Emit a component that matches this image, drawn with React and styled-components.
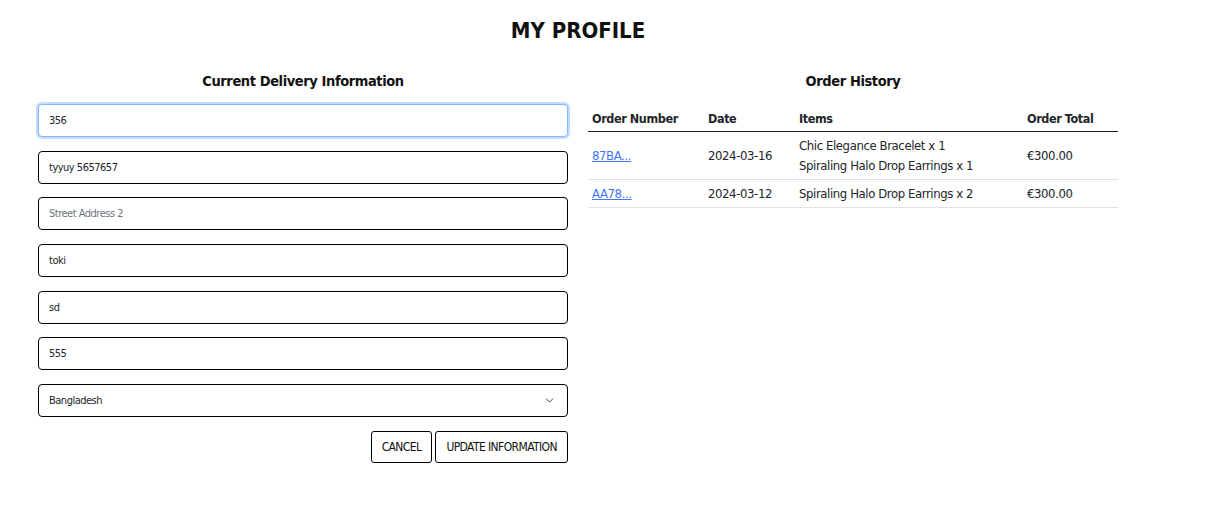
import React from "react";
import styled, { createGlobalStyle } from "styled-components";
import { ChevronDown } from "lucide-react";

const FONT = `"DejaVu Sans Condensed", "DejaVu Sans", sans-serif`;

const Global = createGlobalStyle`
  html, body { margin: 0; padding: 0; background: #fff; }
  body { font-family: ${FONT}; color: #212529; }
  * { box-sizing: border-box; }
`;

const Page = styled.div`
  padding: 15px 0 40px 38px;
  width: 1118px;
`;

const Title = styled.h1`
  margin: 0;
  text-align: center;
  font-size: 22px;
  line-height: 32px;
  font-weight: 700;
  letter-spacing: 0px;
  color: #111;
`;

const Columns = styled.div`
  display: grid;
  grid-template-columns: 530px 530px;
  column-gap: 20px;
  margin-top: 22px;
`;

const Column = styled.section`
  display: flex;
  flex-direction: column;
`;

const Heading = styled.h2`
  margin: 0 0 ${(p) => p.$gap}px;
  text-align: center;
  font-size: 14.5px;
  line-height: 24px;
  font-weight: 700;
  letter-spacing: -0.4px;
  color: #111;
`;

const Form = styled.form`
  display: flex;
  flex-direction: column;
  gap: 13.7px;
`;

const Input = styled.input`
  display: block;
  width: 100%;
  height: 33px;
  padding: 0 10px;
  font-family: ${FONT};
  font-size: 11px;
  letter-spacing: -0.5px;
  color: #212529;
  background: #fff;
  border: 1px solid ${(p) => (p.$focused ? "#86b7fe" : "#000")};
  border-radius: 4px;
  box-shadow: ${(p) => (p.$focused ? "0 0 0 2px rgba(13,110,253,0.25)" : "none")};
  outline: none;
  &::placeholder { color: #6c757d; }
`;

const SelectWrap = styled.div`
  position: relative;
`;

const Select = styled.select`
  appearance: none;
  -webkit-appearance: none;
  display: block;
  width: 100%;
  height: 33px;
  padding: 0 10px;
  font-family: ${FONT};
  font-size: 11px;
  letter-spacing: -0.5px;
  color: #212529;
  background: #fff;
  border: 1px solid #000;
  border-radius: 4px;
  outline: none;
`;

const Chevron = styled.span`
  position: absolute;
  right: 12px;
  top: 10px;
  display: flex;
  color: #222;
  pointer-events: none;
`;

const Actions = styled.div`
  display: flex;
  justify-content: flex-end;
  gap: 3px;
`;

const Button = styled.button`
  height: 32px;
  padding: 0 10px;
  font-family: ${FONT};
  font-size: 12px;
  letter-spacing: -0.6px;
  text-transform: uppercase;
  color: #111;
  background: #fff;
  border: 1px solid #000;
  border-radius: 3px;
  cursor: pointer;
`;

const Table = styled.table`
  width: 530px;
  border-collapse: collapse;
  font-size: 13px;
  letter-spacing: -0.4px;
  color: #212529;
  margin-top: 4px;
`;

const Th = styled.th`
  text-align: left;
  font-weight: 700;
  font-size: 12.5px;
  padding: 2px 4px 3px;
  line-height: 18px;
  border-bottom: 1.5px solid #222;
  width: ${(p) => p.$w}px;
`;

const Td = styled.td`
  padding: 3.5px 4px;
  line-height: 20px;
  vertical-align: middle;
  border-bottom: 1px solid #dee2e6;
`;

const OrderLink = styled.a`
  color: #3f78f0;
  text-decoration: underline;
`;

const Item = styled.div``;

const orders = [
  {
    id: "87BA...",
    date: "2024-03-16",
    items: ["Chic Elegance Bracelet x 1", "Spiraling Halo Drop Earrings x 1"],
    total: "€300.00",
  },
  {
    id: "AA78...",
    date: "2024-03-12",
    items: ["Spiraling Halo Drop Earrings x 2"],
    total: "€300.00",
  },
];

export default function App() {
  return (
    <>
      <Global />
      <Page>
        <Title>MY PROFILE</Title>
        <Columns>
          <Column>
            <Heading $gap={11}>Current Delivery Information</Heading>
            <Form onSubmit={(e) => e.preventDefault()}>
              <Input $focused defaultValue="356" />
              <Input defaultValue="tyyuy 5657657" />
              <Input placeholder="Street Address 2" />
              <Input defaultValue="toki" />
              <Input defaultValue="sd" />
              <Input defaultValue="555" />
              <SelectWrap>
                <Select defaultValue="BD">
                  <option value="BD">Bangladesh</option>
                </Select>
                <Chevron>
                  <ChevronDown size={13} strokeWidth={1.6} />
                </Chevron>
              </SelectWrap>
              <Actions>
                <Button type="button">Cancel</Button>
                <Button type="submit">Update Information</Button>
              </Actions>
            </Form>
          </Column>
          <Column>
            <Heading $gap={11}>Order History</Heading>
            <Table>
              <thead>
                <tr>
                  <Th $w={116}>Order Number</Th>
                  <Th $w={91}>Date</Th>
                  <Th $w={228}>Items</Th>
                  <Th $w={95}>Order Total</Th>
                </tr>
              </thead>
              <tbody>
                {orders.map((o) => (
                  <tr key={o.id}>
                    <Td>
                      <OrderLink href="#">{o.id}</OrderLink>
                    </Td>
                    <Td>{o.date}</Td>
                    <Td>
                      {o.items.map((it) => (
                        <Item key={it}>{it}</Item>
                      ))}
                    </Td>
                    <Td>{o.total}</Td>
                  </tr>
                ))}
              </tbody>
            </Table>
          </Column>
        </Columns>
      </Page>
    </>
  );
}
